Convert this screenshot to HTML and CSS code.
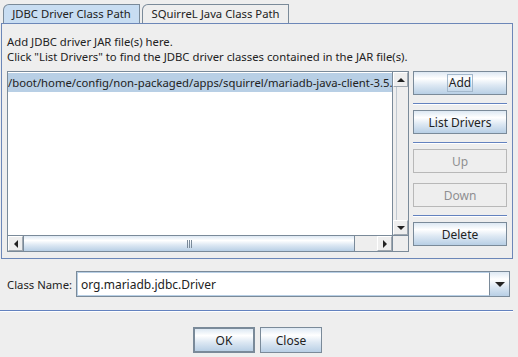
FILE: index.html
```html
<!DOCTYPE html>
<html lang="en">
<head>
    <meta charset="UTF-8">
    <title>Driver Class Path</title>
    <link rel="stylesheet" href="styles.css">
</head>
<body>
    <!-- Tabs -->
    <div class="tabs">
        <div class="tab selected">JDBC Driver Class Path</div>
        <div class="tab second">SQuirreL Java Class Path</div>
    </div>

    <!-- Tab content -->
    <section class="panel">
        <p class="hint">Add JDBC driver JAR file(s) here.<br>Click "List Drivers" to find the JDBC driver classes contained in the JAR file(s).</p>

        <div class="main-row">
            <div class="list">
                <div class="view">
                    <div class="item">/boot/home/config/non-packaged/apps/squirrel/mariadb-java-client-3.5.</div>
                </div>
                <div class="vscroll">
                    <div class="arrow"><span class="tri up"></span></div>
                    <div class="track"></div>
                    <div class="arrow"><span class="tri down"></span></div>
                </div>
                <div class="hscroll">
                    <div class="arrow"><span class="tri left"></span></div>
                    <div class="thumb"><span class="grip"></span></div>
                    <div class="htrack"></div>
                    <div class="arrow"><span class="tri right"></span></div>
                </div>
                <div class="corner"></div>
            </div>

            <div class="actions">
                <button class="btn"><span class="focus">Add</span></button>
                <hr class="sep">
                <button class="btn">List Drivers</button>
                <hr class="sep">
                <button class="btn" disabled>Up</button>
                <button class="btn gap" disabled>Down</button>
                <hr class="sep">
                <button class="btn">Delete</button>
            </div>
        </div>
    </section>

    <!-- Class name -->
    <div class="class-row">
        <label for="cls">Class Name:</label>
        <div class="combo">
            <input id="cls" type="text" value="org.mariadb.jdbc.Driver">
            <div class="combo-btn"><span class="tri down"></span></div>
        </div>
    </div>

    <hr class="sep bottom-sep">

    <div class="footer">
        <button class="btn default">OK</button>
        <button class="btn">Close</button>
    </div>
</body>
</html>
```

FILE: styles.css
```css
/* Base */
* {
    box-sizing: border-box;
    margin: 0;
    padding: 0;
}

body {
    width: 518px;
    height: 357px;
    overflow: hidden;
    background: #eeeeee;
    color: #222222;
    font-family: "Noto Sans", "DejaVu Sans", sans-serif;
    font-size: 11.3px;
}

/* Tabs */
.tabs {
    display: flex;
    gap: 2px;
    padding: 4px 0 0 3px;
    height: 23px;
}

.tab {
    width: 137px;
    height: 19px;
    text-align: center;
    line-height: 18px;
    white-space: nowrap;
    border: 1px solid #7a8a99;
    border-bottom: none;
    border-top-left-radius: 6px;
    background: #eeeeee;
}

.tab.second {
    width: 147px;
}

.tab.selected {
    background: #c8ddf2;
}

/* Tab panel */
.panel {
    margin-left: 1px;
    width: 512px;
    height: 236px;
    border: 1px solid #6c87b8;
    padding: 10px 5px 0 5px;
}

.hint {
    line-height: 15px;
}

.main-row {
    display: flex;
    gap: 4px;
    margin-top: 7px;
}

/* List with scrollbars */
.list {
    width: 402px;
    height: 181px;
    display: grid;
    grid-template-columns: 1fr 16px;
    grid-template-rows: 1fr 16px;
    border: 1px solid #7a8a99;
    background: #ffffff;
}

.view {
    overflow: hidden;
    padding-top: 1px;
}

.item {
    white-space: nowrap;
    background: #b8cfe5;
    height: 19px;
    line-height: 19px;
}

.vscroll {
    display: flex;
    flex-direction: column;
    background: #eeeeee;
    border-left: 1px solid #7a8a99;
}

.vscroll .track {
    flex: 1;
    border-left: 1px solid #c0c8d0;
    margin-left: 3px;
}

.hscroll {
    display: flex;
    background: #eeeeee;
    border-top: 1px solid #7a8a99;
}

.arrow {
    width: 15px;
    height: 15px;
    flex: none;
    display: flex;
    align-items: center;
    justify-content: center;
    background: #eeeeee;
    border: 1px solid #ffffff;
    border-right-color: #a0a8b0;
    border-bottom-color: #a0a8b0;
}

.thumb {
    width: 332px;
    border-left: 1px solid #7a8a99;
    border-right: 1px solid #7a8a99;
    background: linear-gradient(#dde8f3 0%, #ffffff 30%, #dde8f3 60%, #b8cfe5 100%);
    display: flex;
    align-items: center;
    justify-content: center;
}

.grip {
    width: 5px;
    height: 8px;
    border-left: 1px solid #7a8a99;
    border-right: 1px solid #7a8a99;
    position: relative;
}

.grip::after {
    content: "";
    position: absolute;
    left: 1px;
    top: 0;
    width: 1px;
    height: 8px;
    background: #7a8a99;
}

.htrack {
    flex: 1;
}

.corner {
    background: #eeeeee;
    border-top: 1px solid #7a8a99;
    border-left: 1px solid #7a8a99;
}

/* Arrow glyphs */
.tri {
    width: 0;
    height: 0;
    border: 4px solid transparent;
}

.tri.up {
    border-bottom-color: #222;
    border-top-width: 0;
}

.tri.down {
    border-top-color: #222;
    border-bottom-width: 0;
}

.tri.left {
    border-right-color: #222;
    border-left-width: 0;
}

.tri.right {
    border-left-color: #222;
    border-right-width: 0;
}

/* Buttons */
.actions {
    width: 94px;
    display: flex;
    flex-direction: column;
}

.btn {
    height: 24px;
    flex: none;
    border: 1px solid #7a8a99;
    background: linear-gradient(#dde8f3 0%, #ffffff 30%, #dde8f3 60%, #b8cfe5 100%);
    font-family: inherit;
    font-size: 12px;
    color: #222;
    display: flex;
    align-items: center;
    justify-content: center;
}

.btn:disabled {
    background: #eeeeee;
    border-color: #b8b8b8;
    color: #8e8f91;
}

.btn.gap {
    margin-top: 10px;
}

.focus {
    border: 1px solid #a3b8cc;
    padding: 0 1px;
    line-height: 16px;
}

.sep {
    border: none;
    border-top: 1px solid #6382bf;
    border-bottom: 1px solid #ffffff;
    margin: 8px 0 5px;
}

/* Class name row */
.class-row {
    display: flex;
    align-items: center;
    padding: 12px 0 0 7px;
}

.class-row label {
    flex: none;
    width: 69px;
    white-space: nowrap;
}

.combo {
    display: flex;
    width: 434px;
    height: 26px;
    border: 1px solid #7a8a99;
}

.combo input {
    flex: 1;
    min-width: 0;
    border: 1px solid #b8cfe5;
    border-right: 1px solid #7a8a99;
    padding-left: 3px;
    font-family: inherit;
    font-size: 12px;
    color: #222;
    outline: none;
}

.combo-btn {
    width: 19px;
    display: flex;
    align-items: center;
    justify-content: center;
    background: linear-gradient(#dde8f3 0%, #ffffff 30%, #dde8f3 60%, #b8cfe5 100%);
}

.combo-btn .tri {
    border-width: 5px;
    border-bottom-width: 0;
}

.bottom-sep {
    width: 513px;
    margin: 13px 0 0;
}

/* Footer */
.footer {
    display: flex;
    justify-content: center;
    gap: 5px;
    padding-top: 15px;
    margin-left: -3px;
}

.footer .btn {
    width: 62px;
    height: 26px;
}

.btn.default {
    border: 2px solid #7a8a99;
}
```
